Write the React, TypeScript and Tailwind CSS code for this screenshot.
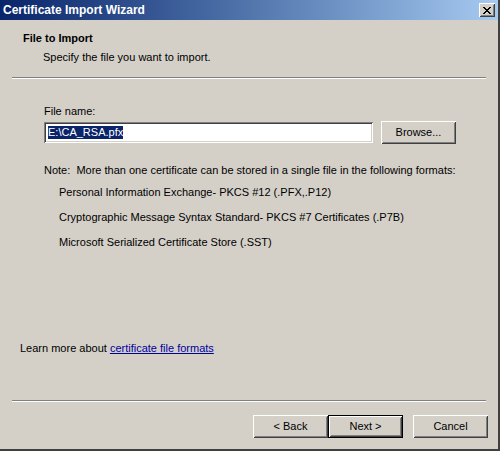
const raised =
  'shadow-[inset_1px_1px_0_#ffffff,inset_-1px_-1px_0_#404040,inset_2px_2px_0_#d4d0c8,inset_-2px_-2px_0_#808080]';
const sunken =
  'shadow-[inset_1px_1px_0_#808080,inset_-1px_-1px_0_#ffffff,inset_2px_2px_0_#404040,inset_-2px_-2px_0_#d4d0c8]';

function Button({ label, primary, className = '' }: { label: string; primary?: boolean; className?: string }) {
  return (
    <div
      className={`h-[23px] flex items-center justify-center text-[11px] text-black bg-[#d4d0c8] ${
        primary
          ? 'border border-black shadow-[inset_1px_1px_0_#ffffff,inset_-1px_-1px_0_#404040,inset_2px_2px_0_#d4d0c8,inset_-2px_-2px_0_#808080]'
          : raised
      } ${className}`}
    >
      {label}
    </div>
  );
}

function Separator() {
  return (
    <div className="mx-[12px] flex flex-col">
      <div className="h-px bg-[#808080]" />
      <div className="h-px bg-white" />
    </div>
  );
}

const FORMATS = [
  'Personal Information Exchange- PKCS #12 (.PFX,.P12)',
  'Cryptographic Message Syntax Standard- PKCS #7 Certificates (.P7B)',
  'Microsoft Serialized Certificate Store (.SST)',
];

export default function App() {
  return (
    <div
      className="w-[500px] h-[451px] bg-[#d4d0c8] flex flex-col border-r-2 border-b-2 border-r-[#404040] border-b-[#404040] overflow-hidden select-none"
      style={{ fontFamily: 'Tahoma, "Liberation Sans", Arial, sans-serif' }}
    >
      {/* title bar */}
      <div className="h-[20px] shrink-0 flex items-center justify-between pl-[3px] pr-[3px] bg-gradient-to-r from-[#0a246a] to-[#a6caf0]">
        <span className="text-white font-bold text-[12px] leading-none">Certificate Import Wizard</span>
        <div className={`w-[16px] h-[14px] bg-[#d4d0c8] flex items-center justify-center ${raised}`}>
          <svg width="8" height="7" viewBox="0 0 8 7" shapeRendering="crispEdges">
            <path d="M0 0h2v1h-2zM6 0h2v1h-2zM1 1h2v1h-2zM5 1h2v1h-2zM2 2h4v1h-4zM3 3h2v1h-2zM2 4h4v1h-4zM1 5h2v1h-2zM5 5h2v1h-2zM0 6h2v1h-2zM6 6h2v1h-2z" fill="#000" />
          </svg>
        </div>
      </div>

      {/* header */}
      <div className="h-[57px] shrink-0 pt-[12px] pl-[23px] text-[11px] text-black">
        <div className="font-bold leading-[13px]">File to Import</div>
        <div className="pl-[20px] mt-[6px] leading-[13px]">Specify the file you want to import.</div>
      </div>
      <Separator />

      {/* body */}
      <div className="flex-1 flex flex-col text-[11px] text-black">
        <div className="pl-[44px] pt-[26px] leading-[13px]">File name:</div>
        <div className="flex items-center pl-[44px] mt-[3px]">
          <div className={`w-[329px] h-[21px] bg-white flex items-center pl-[4px] ${sunken}`}>
            <span className="bg-[#0a246a] text-white leading-[13px]">E:\CA_RSA.pfx</span>
          </div>
          <Button label="Browse..." className="w-[75px] ml-[8px]" />
        </div>

        <div className="pl-[44px] mt-[20px] leading-[13px]">
          Note:&nbsp; More than one certificate can be stored in a single file in the following formats:
        </div>
        <div className="flex flex-col gap-[12px] pl-[59px] mt-[9px]">
          {FORMATS.map(f => (
            <div key={f} className="leading-[13px]">{f}</div>
          ))}
        </div>

        <div className="pl-[20px] mt-[93px] leading-[13px]">
          Learn more about <span className="text-[#0000a0] underline">certificate file formats</span>
        </div>
      </div>

      <Separator />
      <div className="h-[47px] shrink-0 flex items-start pt-[13px] pl-[253px]">
        <Button label="< Back" className="w-[75px]" />
        <Button label="Next >" primary className="w-[75px]" />
        <Button label="Cancel" className="w-[75px] ml-[10px]" />
      </div>
    </div>
  );
}
